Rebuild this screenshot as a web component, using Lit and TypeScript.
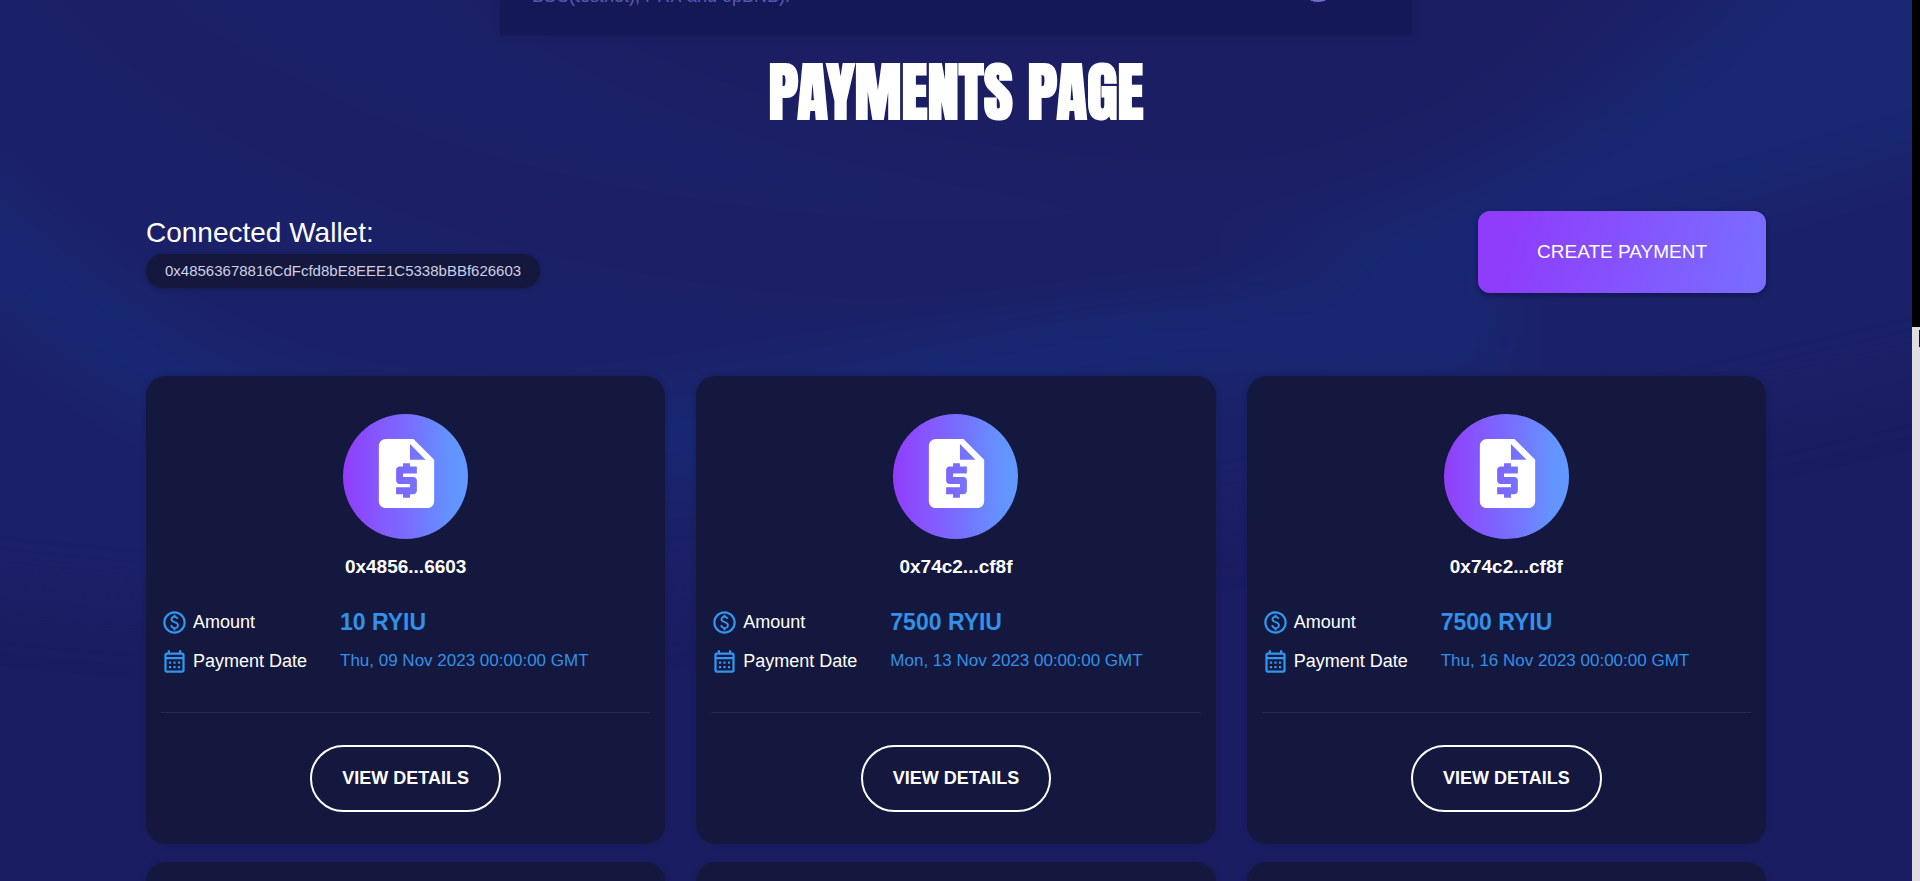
import { LitElement, html, css } from "lit";
import { customElement, property } from "lit/decorators.js";

interface Payment {
  wallet: string;
  amount: string;
  date: string;
}

const PAYMENTS: Payment[] = [
  { wallet: "0x4856...6603", amount: "10 RYIU", date: "Thu, 09 Nov 2023 00:00:00 GMT" },
  { wallet: "0x74c2...cf8f", amount: "7500 RYIU", date: "Mon, 13 Nov 2023 00:00:00 GMT" },
  { wallet: "0x74c2...cf8f", amount: "7500 RYIU", date: "Thu, 16 Nov 2023 00:00:00 GMT" },
];

@customElement("payment-card")
export class PaymentCard extends LitElement {
  @property({ attribute: false }) payment?: Payment;

  static styles = css`
    :host {
      display: block;
      box-sizing: border-box;
      min-height: 200px;
      padding: 38px 15px 32px;
      border-radius: 20px;
      background: #15183e;
      box-shadow: 0 0 5px rgba(21, 24, 62, 0.5);
      color: #fff;
    }
    .card {
      display: flex;
      flex-direction: column;
      align-items: center;
    }
    .badge {
      display: flex;
      justify-content: center;
      box-sizing: border-box;
      width: 125px;
      height: 125px;
      padding: 18px 0 0 2px;
      border-radius: 50%;
      background: linear-gradient(90deg, #923cfa 0%, #8558ff 28%, #7770ff 55%, #6492ff 85%, #6199ff 100%);
    }
    .badge svg {
      width: 83px;
      height: 83px;
      fill: #fff;
    }
    .wallet {
      margin: 16px 0 0;
      font-size: 19px;
      line-height: 24px;
      font-weight: 700;
    }
    .facts {
      display: grid;
      grid-template-columns: 179px 1fr;
      row-gap: 11px;
      align-self: stretch;
      margin: 29px 0 0;
    }
    dt,
    dd {
      display: flex;
      align-items: center;
      margin: 0;
      height: 28px;
    }
    dt {
      gap: 5px;
      font-size: 18px;
    }
    dt svg {
      width: 27px;
      height: 27px;
      fill: #3196f0;
    }
    dd {
      color: #3190e8;
      font-size: 17px;
    }
    .amount {
      font-size: 23px;
      font-weight: 700;
    }
    .divider {
      align-self: stretch;
      height: 1px;
      margin: 37px 0 32px;
      border: 0;
      background: #262750;
    }
    button {
      box-sizing: border-box;
      height: 67px;
      padding: 0 30px;
      border: 2px solid #fff;
      border-radius: 34px;
      background: transparent;
      color: #fff;
      font: 700 18px "Liberation Sans", Arial, sans-serif;
    }
  `;

  render() {
    const p = this.payment;
    if (!p) return html``;
    return html`
      <article class="card">
        <div class="badge">
          <svg viewBox="0 0 24 24" aria-hidden="true">
            <path
              d="M14 2H6c-1.1 0-1.99.9-1.99 2L4 20c0 1.1.89 2 1.99 2H18c1.1 0 2-.9 2-2V8l-6-6zm1 10h-4v1h3c.55 0 1 .45 1 1v3c0 .55-.45 1-1 1h-1v1h-2v-1H9v-2h4v-1h-3c-.55 0-1-.45-1-1v-3c0-.55.45-1 1-1h1V9h2v1h2v2zm-2-4V3.5L17.5 8H13z"
            />
          </svg>
        </div>
        <h2 class="wallet">${p.wallet}</h2>
        <dl class="facts">
          <dt>
            <svg viewBox="0 0 24 24" aria-hidden="true">
              <path
                d="M12 2C6.48 2 2 6.48 2 12s4.48 10 10 10 10-4.48 10-10S17.52 2 12 2zm0 18c-4.41 0-8-3.59-8-8s3.59-8 8-8 8 3.59 8 8-3.59 8-8 8zm.89-8.9c-1.78-.59-2.64-.96-2.64-1.9 0-1.02 1.11-1.39 1.81-1.39 1.31 0 1.79.99 1.9 1.34l1.58-.67c-.15-.44-.82-1.91-2.66-2.23V5h-1.75v1.26c-2.6.56-2.62 2.85-2.62 2.96 0 2.27 2.25 2.91 3.35 3.31 1.58.56 2.28 1.07 2.28 2.03 0 1.13-1.05 1.61-1.98 1.61-1.82 0-2.34-1.87-2.4-2.09l-1.66.67c.63 2.19 2.28 2.78 3.02 2.96V19h1.75v-1.24c.52-.09 3.02-.59 3.02-3.22.01-1.39-.6-2.61-3-3.44z"
              />
            </svg>
            Amount
          </dt>
          <dd class="amount">${p.amount}</dd>
          <dt>
            <svg viewBox="0 0 24 24" aria-hidden="true">
              <path
                d="M19 4h-1V2h-2v2H8V2H6v2H5c-1.11 0-1.99.9-1.99 2L3 20c0 1.1.89 2 2 2h14c1.1 0 2-.9 2-2V6c0-1.1-.9-2-2-2zm0 16H5V10h14v10zm0-12H5V6h14v2zM9 14H7v-2h2v2zm4 0h-2v-2h2v2zm4 0h-2v-2h2v2zm-8 4H7v-2h2v2zm4 0h-2v-2h2v2zm4 0h-2v-2h2v2z"
              />
            </svg>
            Payment Date
          </dt>
          <dd>${p.date}</dd>
        </dl>
        <hr class="divider" />
        <button type="button">VIEW DETAILS</button>
      </article>
    `;
  }
}

@customElement("app-root")
export class AppRoot extends LitElement {
  static styles = css`
    :host {
      display: flex;
      height: 100vh;
      overflow: hidden;
      font-family: "Liberation Sans", Arial, sans-serif;
      color: #fff;
    }
    .page {
      position: relative;
      z-index: 0;
      flex: 1;
      min-width: 0;
      overflow: hidden;
      background: #1b1d62;
    }
    .waves {
      position: absolute;
      inset: 0;
      z-index: -1;
      width: 100%;
      height: 100%;
    }
    .scrollbar {
      display: flex;
      flex-direction: column;
      width: 8px;
      background: #000;
    }
    .thumb {
      margin-top: 327px;
      padding-top: 3px;
      flex: 1;
      background: #dededf;
    }
    .mark {
      width: 1px;
      height: 17px;
      margin-left: auto;
      background: #111;
    }
    .notice {
      display: flex;
      justify-content: space-between;
      box-sizing: border-box;
      width: 48%;
      max-width: 912px;
      height: 35px;
      margin: 0 auto;
      padding: 0 76px 0 32px;
      background: #151857;
      box-shadow: 0 0 6px rgba(21, 24, 87, 0.8);
      color: #5a58b4;
      font-size: 18px;
      line-height: 20px;
    }
    .notice p {
      margin: -14px 0 0;
    }
    .dot {
      width: 36px;
      height: 36px;
      margin-top: -34px;
      border-radius: 50%;
      background: #6f6bc9;
    }
    h1 {
      margin: 20px 0 0;
      text-align: center;
      font-family: Anton, "Liberation Sans Narrow", "Liberation Sans", sans-serif;
      font-weight: 700;
      font-size: 63px;
      line-height: 76px;
    }
    .content {
      width: 85%;
      max-width: 1620px;
      margin: 0 auto;
    }
    .toolbar {
      display: flex;
      justify-content: space-between;
      align-items: center;
      margin-top: 80px;
    }
    .account {
      padding-bottom: 2px;
    }
    .label {
      margin: 0;
      font-size: 28px;
      line-height: 36px;
    }
    .address {
      display: block;
      margin-top: 3px;
      padding: 0 19px;
      border-radius: 18px;
      background: #15183e;
      box-shadow: 0 1px 4px rgba(21, 24, 62, 0.6);
      color: #d0d0e4;
      font-size: 15px;
      line-height: 34px;
    }
    .create {
      height: 82px;
      padding: 0 59px;
      border: 0;
      border-radius: 12px;
      background: linear-gradient(100deg, #8f3cfb 10%, #7a6cff 95%);
      box-shadow: 0 2px 5px rgba(10, 12, 60, 0.6);
      color: #fff;
      font: 400 19px "Liberation Sans", Arial, sans-serif;
    }
    .grid {
      display: grid;
      grid-template-columns: repeat(3, 1fr);
      gap: 18px 31px;
      margin-top: 83px;
    }
  `;

  render() {
    return html`
      <main class="page">
        <svg class="waves" viewBox="0 0 1912 881" preserveAspectRatio="none" aria-hidden="true">
          <defs>
            <filter
              id="soft"
              filterUnits="userSpaceOnUse"
              x="-200"
              y="-200"
              width="2312"
              height="1281"
              color-interpolation-filters="sRGB"
            >
              <feGaussianBlur stdDeviation="30" />
            </filter>
          </defs>
          <g filter="url(#soft)">
            <path d="M-200 -200H2112V330C1700 420 1500 480 956 560S100 620 -200 560Z" fill="#1b2168" />
            <path d="M-100 170C60 300 160 400 340 440S800 420 1000 370S1320 330 1500 330" fill="none" stroke="#172874" stroke-width="80" />
            <path d="M1300 250C1480 200 1640 120 1800 -60L2000 -60V130C1860 160 1640 240 1400 290Z" fill="#182873" />
            <path d="M40 -80C200 140 560 290 1240 265" fill="none" stroke="#1c1d62" stroke-width="44" />
            <path d="M400 -60C600 100 900 190 1240 190C1400 170 1560 90 1660 -60Z" fill="#1b1e63" />
          </g>
        </svg>
        <aside class="notice">
          <p>BSC(testnet), PRX and opBNB).</p>
          <span class="dot"></span>
        </aside>
        <h1>PAYMENTS PAGE</h1>
        <div class="content">
          <section class="toolbar">
            <div class="account">
              <p class="label">Connected Wallet:</p>
              <span class="address">0x48563678816CdFcfd8bE8EEE1C5338bBBf626603</span>
            </div>
            <button class="create" type="button">CREATE PAYMENT</button>
          </section>
          <section class="grid">
            ${PAYMENTS.map((p) => html`<payment-card .payment=${p}></payment-card>`)}
            <payment-card></payment-card>
            <payment-card></payment-card>
            <payment-card></payment-card>
          </section>
        </div>
      </main>
      <div class="scrollbar"><div class="thumb"><div class="mark"></div></div></div>
    `;
  }
}
